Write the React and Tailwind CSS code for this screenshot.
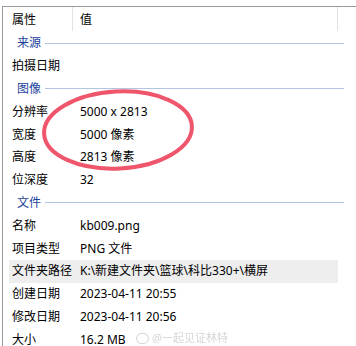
import React from "react";

const sections = [
  { title: "来源", rows: [["拍摄日期", ""]] },
  {
    title: "图像",
    rows: [
      ["分辨率", "5000 x 2813"],
      ["宽度", "5000 像素"],
      ["高度", "2813 像素"],
      ["位深度", "32"],
    ],
  },
  {
    title: "文件",
    rows: [
      ["名称", "kb009.png"],
      ["项目类型", "PNG 文件"],
      ["文件夹路径", "K:\\新建文件夹\\篮球\\科比330+\\横屏", true],
      ["创建日期", "2023-04-11 20:55"],
      ["修改日期", "2023-04-11 20:56"],
      ["大小", "16.2 MB"],
    ],
  },
];

const SectionRow = ({ title }) => (
  <div className="flex h-[22.8px] items-center">
    <span className="pl-[14px] pr-[4px] text-[#1c3f9c]">{title}</span>
    <div className="h-px w-[299px] bg-[#b3c5e3]" />
  </div>
);

const PropRow = ({ label, value, active }) => (
  <div className={"ml-[6px] flex h-[22.8px] w-[329px] items-center " + (active ? "bg-[#eeeeee]" : "")}>
    <span className="w-[71px] shrink-0 pl-[3px]">{label}</span>
    <span className="whitespace-nowrap">{value}</span>
  </div>
);

export default function App() {
  return (
    <div
      className="relative h-[346px] w-[356px] overflow-hidden bg-white text-[12px] leading-[14px] text-black"
      style={{ fontFamily: '"Noto Sans", "Noto Sans CJK SC", sans-serif' }}
    >
      <div className="ml-[2px] mt-[6px] h-[340px] border-l border-t border-[#999999]">
        {/* header */}
        <div className="flex h-[25px] items-center">
          <span className="w-[69px] pl-[9px]">属性</span>
          <div className="h-[24px] w-px self-start bg-[#e3e3e3]" />
          <span className="w-[264px] pl-[7px]">值</span>
          <div className="h-[24px] w-px self-start bg-[#e3e3e3]" />
        </div>
        {sections.map((s) => (
          <div key={s.title}>
            <SectionRow title={s.title} />
            {s.rows.map((r) => (
              <PropRow key={r[0]} label={r[0]} value={r[1]} active={r[2]} />
            ))}
          </div>
        ))}
      </div>

      {/* red marker ellipse */}
      <svg className="pointer-events-none absolute left-0 top-0" width="356" height="346">
        <ellipse
          cx="118"
          cy="130"
          rx="74"
          ry="38.5"
          transform="rotate(-3 118 130)"
          fill="none"
          stroke="#ef566c"
          strokeWidth="4"
        />
      </svg>

      {/* watermark */}
      <div className="pointer-events-none absolute left-[136px] top-[332px] flex items-center gap-[3px] text-[11px] leading-[12px] text-[#d6d6d6] blur-[0.6px]">
        <span className="inline-block h-[11px] w-[13px] rounded-full border border-[#d0d0d0]" />
        <span>@一起见证林特</span>
      </div>
    </div>
  );
}
